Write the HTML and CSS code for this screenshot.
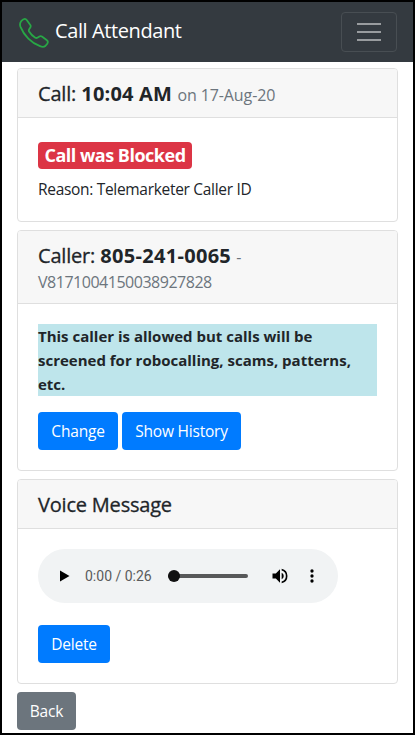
FILE: index.html
```html
<!DOCTYPE html>
<html lang="en">
<head>
<meta charset="utf-8">
<title>Call Attendant</title>
<link rel="stylesheet" href="styles.css">
</head>
<body>
<nav class="navbar">
  <a class="brand">
    <svg class="phone" viewBox="0 0 30 30"><path d="M2.2 3.2C3.3 1.900 4.500.9 5.800.9c.9 0 1.500.5 2.100 1.300l3.400 4.700c.6.9.5 1.700 0 2.500l-1.200 2c-.4.7-.4 1.400 0 2.100 1.600 2.600 3.600 4.600 6.200 6.200.7.4 1.400.4 2.100 0l2-1.200c.8-.5 1.600-.6 2.500 0l4.700 3.400c.8.6 1.300 1.200 1.300 2.100 0 1.200-1.200 2.900-2.600 4-1.300 1.100-3.500.9-5.300.2C12.500 25 4.900 17.500 1.500 8.900.8 7 .9 4.800 2.200 3.200z"/></svg>
    <span>Call Attendant</span>
  </a>
  <button class="toggler" aria-label="Toggle navigation"><svg viewBox="0 0 30 30"><path d="M3 7h24M3 15h24M3 23h24"/></svg></button>
</nav>
<main>
  <section class="card">
    <h5 class="card-header"><span class="label">Call:</span> <strong>10:04 AM</strong> <small>on 17-Aug-20</small></h5>
    <div class="card-body call-body">
      <div class="badge">Call was Blocked</div>
      <p class="reason">Reason: Telemarketer Caller ID</p>
    </div>
  </section>
  <section class="card">
    <h5 class="card-header two-line"><span class="label">Caller:</span> <strong class="number">805-241-0065</strong> <small>-<br><span class="caller-id">V8171004150038927828</span></small></h5>
    <div class="card-body caller-body">
      <p class="notice">This caller is allowed but calls will be<br>screened for robocalling, scams, patterns,<br>etc.</p>
      <div class="actions"><button class="btn change">Change</button><button class="btn history">Show History</button></div>
    </div>
  </section>
  <section class="card">
    <h5 class="card-header"><span class="label">Voice Message</span></h5>
    <div class="card-body voice-body">
      <div class="player">
        <svg class="play" viewBox="0 0 10 12"><path d="M0 .5v11L9.500 6z"/></svg>
        <span class="time">0:00 / 0:26</span>
        <div class="track"><i class="thumb"></i></div>
        <svg class="volume" viewBox="0 0 24 24"><path d="M3 9v6h4l5 5V4L7 9H3zm13.500 3A4.500 4.500 0 0 0 14 7.970v8.050A4.470 4.470 0 0 0 16.500 12zM14 3.230v2.060a7 7 0 0 1 0 13.420v2.060a9 9 0 0 0 0-17.540z"/></svg>
        <svg class="more" viewBox="0 0 24 24"><path d="M12 8a2 2 0 1 0 0-4 2 2 0 0 0 0 4zm0 2a2 2 0 1 0 0 4 2 2 0 0 0 0-4zm0 6a2 2 0 1 0 0 4 2 2 0 0 0 0-4z"/></svg>
      </div>
      <button class="btn delete">Delete</button>
    </div>
  </section>
  <button class="btn back">Back</button>
</main>
</body>
</html>
```
FILE: styles.css
```css
* { box-sizing: border-box; }
body {
  margin: 0;
  height: 735px;
  overflow: hidden;
  border: 2px solid #000;
  background: #fff;
  color: #212529;
  font: 16px/24px "Open Sans", "Noto Sans", sans-serif;
  white-space: nowrap;
}
.navbar {
  height: 60px;
  padding: 0 16px 0 17px;
  background: #343a40;
  display: flex;
  align-items: center;
  justify-content: space-between;
}
.brand {
  display: flex;
  align-items: center;
  gap: 6px;
  color: #fff;
  font-size: 20px;
  line-height: 30px;
  letter-spacing: -0.4px;
}
.brand span { margin-top: -2px; }
.phone { width: 30px; height: 30px; fill: none; stroke: #28a745; stroke-width: 1.8; margin-top: 2px; }
.toggler {
  width: 56px;
  height: 40px;
  padding: 0;
  background: none;
  border: 1px solid #484e53;
  border-radius: 4px;
  display: grid;
  place-items: center;
}
.toggler svg { width: 30px; height: 30px; stroke: #999c9f; stroke-width: 2; }
main { padding: 6px 15px 0; }
.card {
  border: 1px solid #dfdfdf;
  border-radius: 4px;
  margin-bottom: 8px;
  overflow: hidden;
}
.card-header {
  margin: 0;
  height: 49px;
  padding: 13px 20px 11px;
  background: #f7f7f7;
  border-bottom: 1px solid #dfdfdf;
  font-size: 20px;
  line-height: 24px;
  font-weight: 500;
}
.two-line { height: 73px; }
.label { letter-spacing: -0.2px; -webkit-text-stroke: 0.3px #212529; }
.card-header strong { font-weight: 700; letter-spacing: 0.2px; }
.card-header .number { letter-spacing: 0.3px; }
.card-header small { font-size: 16px; font-weight: 400; color: #6c757d; letter-spacing: -0.1px; }
.card-header .caller-id { letter-spacing: -0.48px; }
.card-body { padding: 20px; }
.call-body { height: 103px; }
.badge {
  width: 154px;
  height: 27px;
  margin-top: 4px;
  border-radius: 4px;
  background: #dc3545;
  color: #fff;
  font-size: 18px;
  line-height: 27px;
  font-weight: 700;
  text-align: center;
  letter-spacing: -0.5px;
}
.reason { margin: 8px 0 0; font-size: 15.5px; letter-spacing: -0.31px; }
.caller-body { height: 166px; }
.notice { margin: 0 0 16px; background: #bee5eb; font-size: 15px; font-weight: 700; }
.actions { display: flex; gap: 4px; }
.btn {
  display: block;
  height: 38px;
  padding: 0;
  border: 0;
  border-radius: 4px;
  background: #007bff;
  color: #fff;
  font: 15.5px/24px "Open Sans", sans-serif;
  letter-spacing: -0.2px;
  text-align: center;
}
.change { width: 80px; }
.history { width: 119px; }
.delete { width: 72px; }
.back { width: 59px; background: #6c757d; }
.voice-body { height: 154px; }
.player {
  width: 300px;
  height: 54px;
  margin-bottom: 22px;
  padding-left: 22px;
  border-radius: 27px;
  background: #f1f3f4;
  display: flex;
  align-items: center;
}
.play { width: 10px; height: 12px; }
.time { width: 68px; margin-left: 15px; font: 14px/20px Roboto, sans-serif; color: #5a5b5c; }
.track { position: relative; width: 80px; height: 4px; margin-left: 15px; border-radius: 2px; background: #575859; }
.thumb { position: absolute; left: 0; top: -4px; width: 12px; height: 12px; border-radius: 50%; background: #111; }
.volume { width: 20px; height: 20px; margin-left: 22px; }
.more { width: 20px; height: 20px; margin-left: 12px; }
```
